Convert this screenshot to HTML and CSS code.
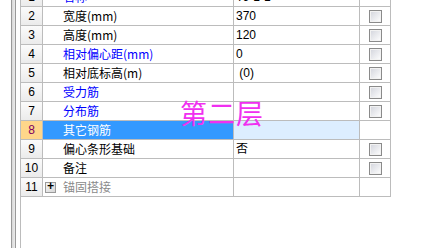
FILE: index.html
```html
<!DOCTYPE html>
<html lang="zh-CN">
<head>
    <meta charset="UTF-8">
    <title>属性编辑</title>
    <link rel="stylesheet" href="styles.css">
</head>
<body>
    <div class="frame">
        <div class="gutter"></div>
        <div class="rail"></div>
        <div class="pad"></div>
        <div class="sheet">
            <div class="grid">
                <div class="row">
                    <div class="num">1</div>
                    <div class="name blue"><span class="twist"></span>名称</div>
                    <div class="val">TJ-1-1</div>
                    <div class="chk"></div>
                </div>
                <div class="row">
                    <div class="num">2</div>
                    <div class="name"><span class="twist"></span>宽度(mm)</div>
                    <div class="val">370</div>
                    <div class="chk"><span class="box"></span></div>
                </div>
                <div class="row">
                    <div class="num">3</div>
                    <div class="name"><span class="twist"></span>高度(mm)</div>
                    <div class="val">120</div>
                    <div class="chk"><span class="box"></span></div>
                </div>
                <div class="row">
                    <div class="num">4</div>
                    <div class="name blue"><span class="twist"></span>相对偏心距(mm)</div>
                    <div class="val">0</div>
                    <div class="chk"><span class="box"></span></div>
                </div>
                <div class="row">
                    <div class="num">5</div>
                    <div class="name"><span class="twist"></span>相对底标高(m)</div>
                    <div class="val">&nbsp;(0)</div>
                    <div class="chk"><span class="box"></span></div>
                </div>
                <div class="row">
                    <div class="num">6</div>
                    <div class="name blue"><span class="twist"></span>受力筋</div>
                    <div class="val"></div>
                    <div class="chk"><span class="box"></span></div>
                </div>
                <div class="row">
                    <div class="num">7</div>
                    <div class="name blue"><span class="twist"></span>分布筋</div>
                    <div class="val"></div>
                    <div class="chk"><span class="box"></span></div>
                </div>
                <div class="row selected">
                    <div class="num">8</div>
                    <div class="name"><span class="twist"></span>其它钢筋</div>
                    <div class="val"></div>
                    <div class="chk"></div>
                </div>
                <div class="row">
                    <div class="num">9</div>
                    <div class="name"><span class="twist"></span>偏心条形基础</div>
                    <div class="val">否</div>
                    <div class="chk"><span class="box"></span></div>
                </div>
                <div class="row">
                    <div class="num">10</div>
                    <div class="name"><span class="twist"></span>备注</div>
                    <div class="val"></div>
                    <div class="chk"><span class="box"></span></div>
                </div>
                <div class="row">
                    <div class="num">11</div>
                    <div class="name gray"><span class="twist plus">+</span>锚固搭接</div>
                    <div class="val"></div>
                    <div class="chk"></div>
                </div>
            </div>
            <div class="floor">第二层</div>
        </div>
    </div>
</body>
</html>
```

FILE: styles.css
```css
body {
    margin: 0;
    background-color: #fff;
    font-family: "Liberation Sans", "Noto Sans CJK SC", sans-serif;
    font-size: 12px;
    overflow: hidden;
}
.frame {
    display: flex;
    height: 248px;
}
.gutter {
    width: 11px;
}
.rail {
    width: 3px;
    border-left: 1px solid #9a9a9a;
    border-right: 1px solid #9a9a9a;
    background: linear-gradient(to right, #d8d8d8, #ececec);
}
.pad {
    width: 4px;
}
.sheet {
    position: relative;
    flex: 1;
    border-left: 1px solid #bcbcbc;
    overflow: hidden;
}
.grid {
    margin-top: -12px;
    width: 370px;
}
.row {
    display: flex;
    height: 19px;
}
.row > div {
    height: 18px;
    line-height: 18px;
    border-right: 1px solid #bcbcbc;
    border-bottom: 1px solid #bcbcbc;
    white-space: nowrap;
}
.num {
    width: 21px;
    text-align: center;
    background: linear-gradient(#fbfbfb, #ebebeb);
}
.name {
    width: 188px;
    padding-left: 2px;
    display: flex;
    align-items: center;
    font-family: "Noto Sans CJK SC", sans-serif;
}
.val {
    width: 123px;
    padding-left: 2px;
    font-family: "Liberation Sans", "Noto Sans CJK SC", sans-serif;
}
.chk {
    width: 30px;
    display: flex;
    align-items: center;
    justify-content: center;
}
.twist {
    width: 11px;
    height: 11px;
    margin-right: 7px;
    flex: none;
}
.plus {
    box-sizing: border-box;
    border: 1px solid #9a9a9a;
    background: linear-gradient(135deg, #f4f4f4, #d8d8d8);
    color: #000;
    font-family: "Liberation Mono", monospace;
    font-size: 12px;
    line-height: 8px;
    text-align: center;
    font-weight: bold;
}
.box {
    box-sizing: border-box;
    width: 13px;
    height: 13px;
    border: 1px solid #8a8a8a;
    background: linear-gradient(135deg, #d2d4dc, #ffffff);
    box-shadow: inset 0 0 0 1px #f2f2f2;
}
.blue {
    color: #0000ff;
}
.gray {
    color: #8a8a8a;
}
.selected .num {
    background: #ffd68a;
    color: #800060;
}
.selected .name {
    background: #3399ff;
    color: #fff;
}
.selected .val {
    background: #ddeeff;
}
.floor {
    position: absolute;
    left: 159px;
    top: 93px;
    font-family: "Noto Sans CJK SC", sans-serif;
    font-size: 27px;
    letter-spacing: 1px;
    color: #f030f0;
}
```
